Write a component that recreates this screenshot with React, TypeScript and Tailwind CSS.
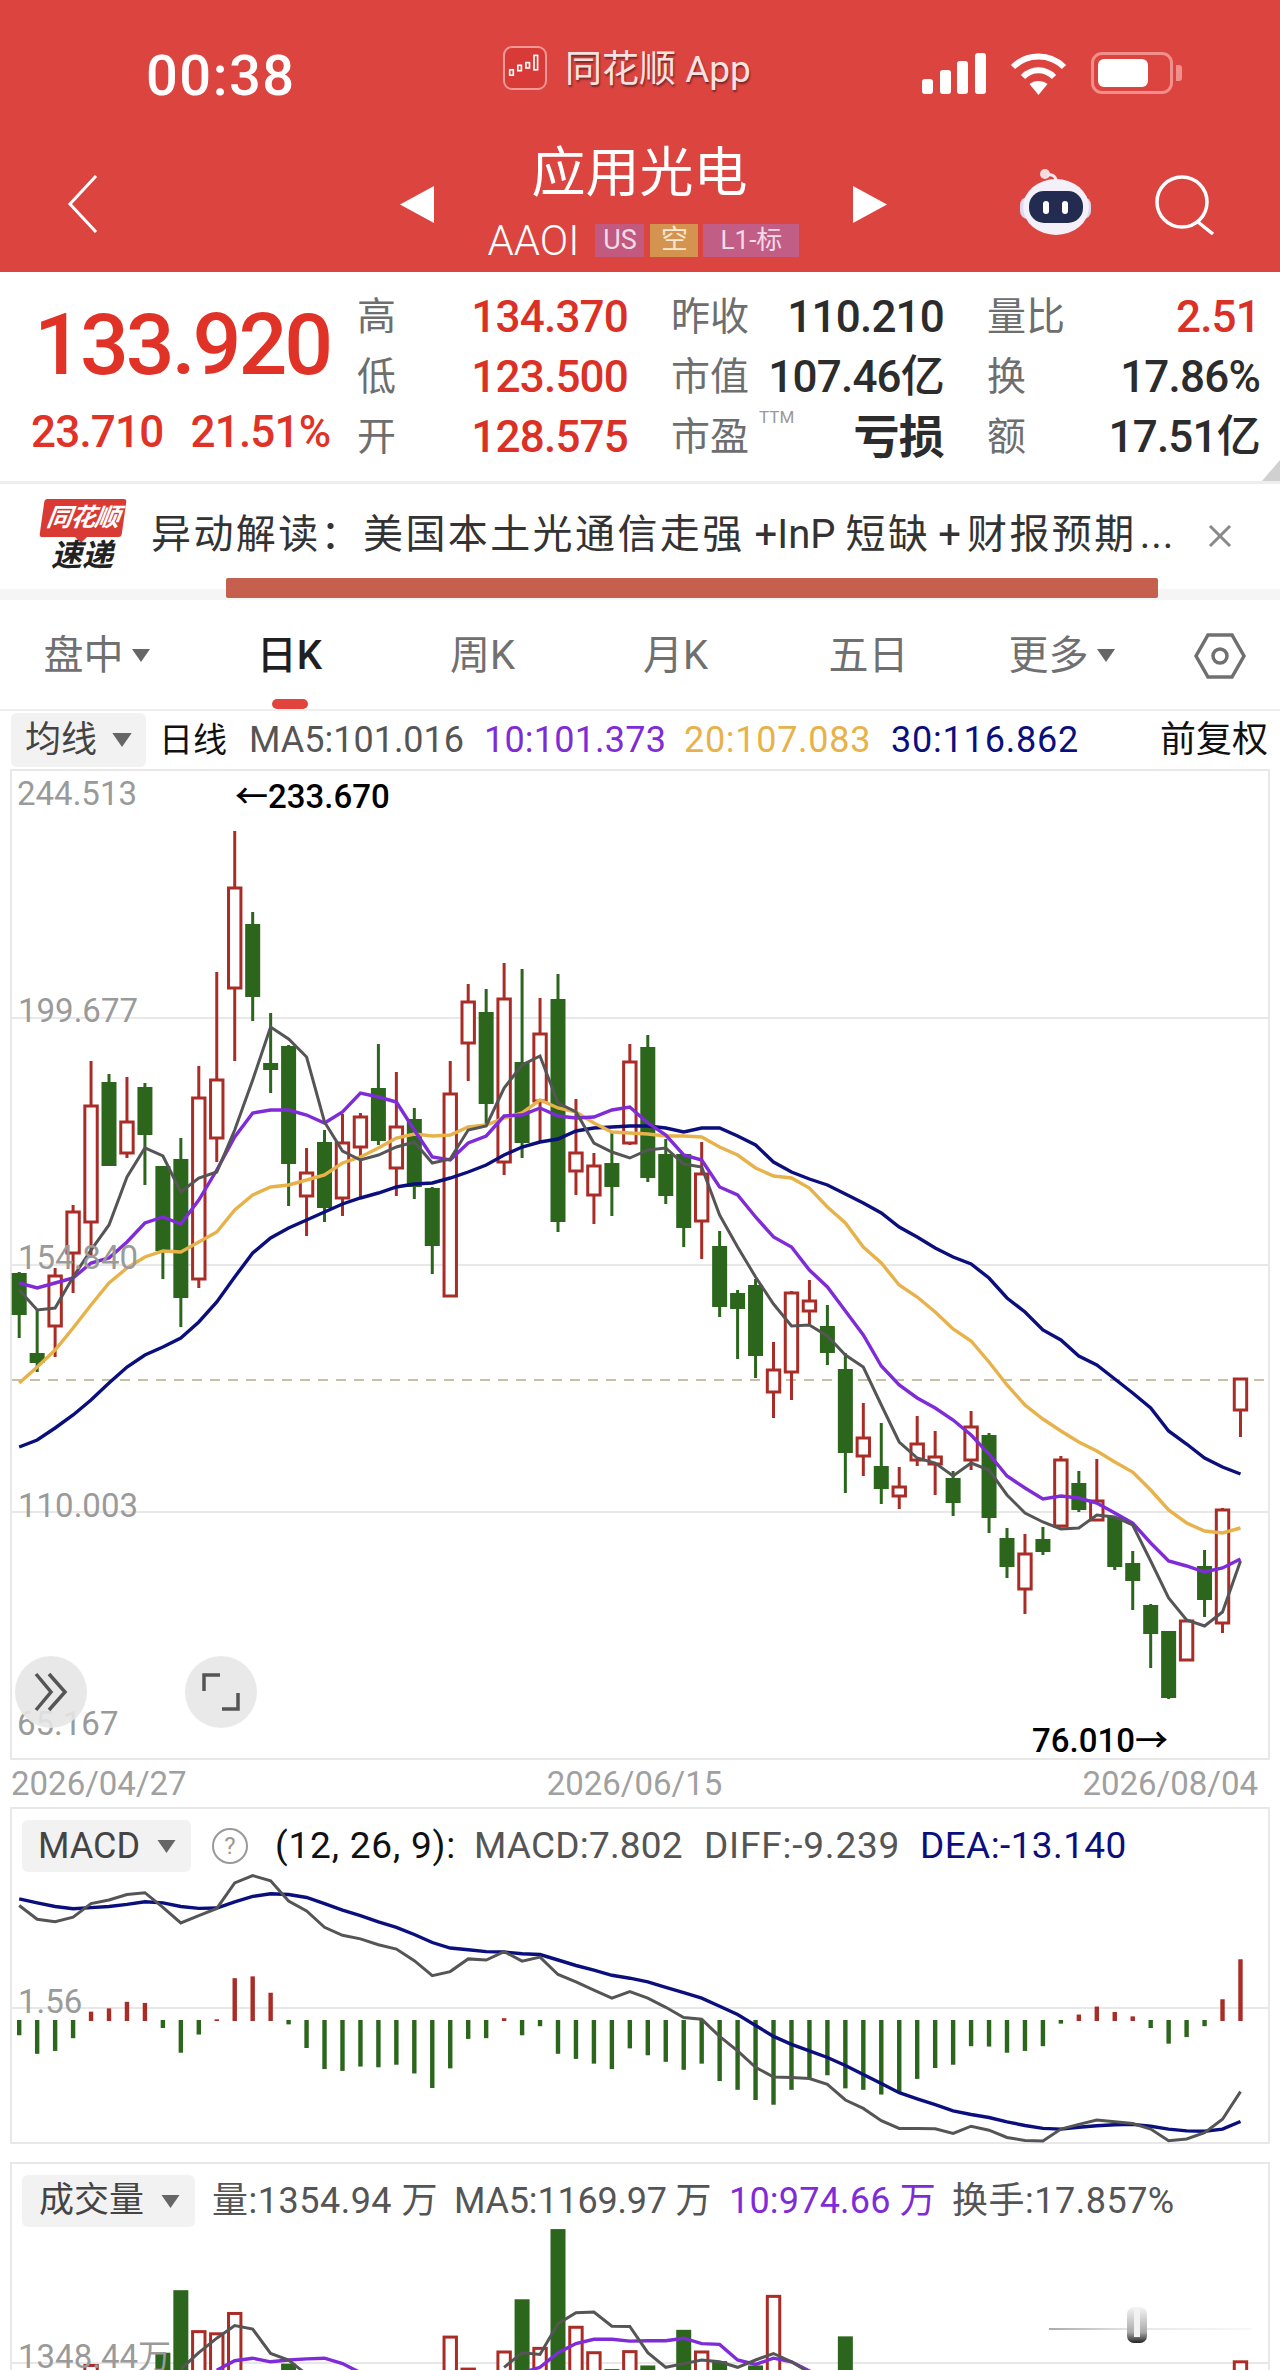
const GREEN = '#2b661c';
const RED = '#a92c26';
const GRAY = '#555555';
const PURPLE = '#7f2bd8';
const YELLOW = '#e8b24a';
const NAVY = '#0a0f7d';

const cx = (i: number) => 19.2 + 17.96 * i;

// [wick top, body top, body bottom, wick bottom, up]
const candles: [number, number, number, number, number][] = [
	[1272, 1273, 1315, 1338, 0], [1310, 1353, 1363, 1372, 0], [1268, 1276, 1326, 1357, 1], [1205, 1212, 1253, 1293, 1],
	[1061, 1106, 1222, 1257, 1], [1074, 1082, 1166, 1166, 0], [1077, 1122, 1153, 1158, 1], [1083, 1087, 1135, 1185, 0],
	[1166, 1166, 1251, 1279, 0], [1138, 1159, 1298, 1327, 0], [1066, 1098, 1279, 1288, 1], [972, 1080, 1138, 1162, 1],
	[831, 888, 988, 1061, 1], [912, 924, 997, 1021, 0], [1013, 1063, 1070, 1093, 0], [1045, 1046, 1164, 1206, 0],
	[1148, 1173, 1196, 1236, 1], [1130, 1142, 1208, 1222, 0], [1114, 1143, 1198, 1216, 1], [1113, 1117, 1147, 1198, 1],
	[1044, 1088, 1141, 1145, 0], [1072, 1127, 1168, 1196, 1], [1108, 1119, 1187, 1199, 0], [1187, 1188, 1246, 1274, 0],
	[1061, 1094, 1296, 1296, 1], [984, 1002, 1043, 1081, 1], [989, 1012, 1104, 1125, 0], [963, 999, 1162, 1175, 1],
	[969, 1062, 1143, 1158, 0], [998, 1034, 1101, 1142, 1], [974, 999, 1222, 1232, 0], [1099, 1153, 1171, 1195, 1],
	[1153, 1166, 1195, 1224, 1], [1133, 1163, 1187, 1216, 0], [1044, 1062, 1143, 1145, 1], [1035, 1047, 1178, 1182, 0],
	[1139, 1154, 1196, 1204, 0], [1154, 1154, 1228, 1247, 0], [1142, 1174, 1221, 1259, 1], [1231, 1246, 1307, 1317, 0],
	[1290, 1293, 1309, 1359, 0], [1279, 1285, 1356, 1378, 0], [1342, 1370, 1392, 1418, 1], [1291, 1293, 1372, 1400, 1],
	[1280, 1301, 1311, 1324, 1], [1305, 1326, 1353, 1365, 0], [1353, 1369, 1453, 1493, 0], [1403, 1438, 1456, 1476, 1],
	[1423, 1466, 1489, 1504, 0], [1467, 1487, 1496, 1509, 1], [1416, 1444, 1460, 1466, 1], [1431, 1457, 1464, 1495, 1],
	[1471, 1478, 1503, 1516, 0], [1411, 1427, 1460, 1470, 1], [1433, 1435, 1518, 1533, 0], [1528, 1538, 1567, 1578, 0],
	[1534, 1554, 1589, 1614, 1], [1527, 1539, 1552, 1555, 0], [1456, 1460, 1526, 1526, 1], [1471, 1483, 1510, 1512, 0],
	[1459, 1501, 1520, 1520, 1], [1516, 1517, 1567, 1570, 0], [1551, 1563, 1581, 1610, 0], [1604, 1605, 1634, 1668, 0],
	[1631, 1631, 1698, 1699, 0], [1621, 1621, 1660, 1661, 1], [1550, 1566, 1600, 1617, 0], [1508, 1510, 1623, 1633, 1],
	[1378, 1379, 1410, 1437, 1],
];

const ma5 = [1290, 1310, 1308, 1277, 1250, 1225, 1177, 1148, 1156, 1192, 1178, 1172, 1130, 1080, 1027, 1039, 1057, 1122, 1151, 1160, 1155, 1147, 1142, 1163, 1159, 1130, 1126, 1088, 1065, 1056, 1103, 1112, 1143, 1152, 1158, 1150, 1148, 1164, 1167, 1215, 1247, 1277, 1304, 1326, 1325, 1336, 1355, 1367, 1405, 1442, 1458, 1463, 1476, 1463, 1470, 1495, 1513, 1522, 1529, 1528, 1515, 1517, 1525, 1561, 1598, 1620, 1626, 1612, 1561];
const ma10 = [1283, 1288, 1283, 1278, 1263, 1258, 1242, 1223, 1217, 1224, 1200, 1170, 1137, 1113, 1110, 1110, 1115, 1123, 1112, 1093, 1097, 1102, 1130, 1157, 1160, 1143, 1136, 1116, 1115, 1108, 1116, 1118, 1117, 1110, 1107, 1123, 1135, 1155, 1160, 1187, 1195, 1217, 1237, 1247, 1270, 1287, 1311, 1335, 1366, 1385, 1398, 1408, 1420, 1435, 1454, 1476, 1488, 1499, 1496, 1498, 1503, 1513, 1523, 1543, 1561, 1566, 1572, 1568, 1559];
const ma20 = [1383, 1367, 1350, 1328, 1305, 1283, 1268, 1257, 1251, 1252, 1242, 1232, 1210, 1195, 1187, 1185, 1180, 1175, 1163, 1157, 1148, 1138, 1134, 1136, 1135, 1127, 1125, 1118, 1113, 1100, 1108, 1112, 1123, 1132, 1133, 1134, 1136, 1136, 1137, 1147, 1155, 1168, 1176, 1178, 1188, 1207, 1223, 1247, 1263, 1285, 1297, 1312, 1329, 1341, 1362, 1385, 1405, 1419, 1431, 1442, 1451, 1462, 1472, 1490, 1510, 1523, 1531, 1533, 1528];
const ma30 = [1447, 1440, 1428, 1415, 1400, 1383, 1367, 1355, 1347, 1338, 1322, 1302, 1277, 1253, 1238, 1228, 1220, 1212, 1204, 1198, 1193, 1187, 1184, 1183, 1178, 1172, 1165, 1155, 1147, 1142, 1139, 1131, 1128, 1127, 1126, 1126, 1128, 1132, 1128, 1128, 1136, 1145, 1162, 1172, 1179, 1185, 1194, 1203, 1213, 1227, 1237, 1248, 1257, 1264, 1278, 1298, 1312, 1330, 1340, 1356, 1365, 1379, 1393, 1408, 1431, 1444, 1458, 1467, 1474];

// values below are read off the 2.75x crop, y = 1800 + v / 2.75
const low = (v: number) => 1800 + v / 2.75;
const macdBars: [number, number][] = [
	[647, 0], [698, 0], [690, 0], [655, 0], [582, 1], [573, 1], [555, 1], [558, 1], [627, 0], [695, 0], [645, 0], [603, 1],
	[490, 1], [485, 1], [530, 1], [617, 0], [682, 0], [740, 0], [745, 0], [733, 0], [735, 0], [728, 0], [752, 0], [792, 0],
	[738, 0], [657, 0], [655, 0], [600, 1], [647, 0], [622, 0], [698, 0], [712, 0], [725, 0], [740, 0], [683, 0], [702, 0],
	[720, 0], [742, 0], [725, 0], [773, 0], [797, 0], [825, 0], [838, 0], [797, 0], [768, 0], [757, 0], [793, 0], [797, 0],
	[810, 0], [805, 0], [767, 0], [737, 0], [728, 0], [677, 0], [678, 0], [695, 0], [690, 0], [677, 0], [615, 0], [590, 1],
	[568, 1], [583, 1], [595, 1], [627, 0], [670, 0], [652, 0], [622, 0], [548, 1], [438, 1],
];
const diff = [290, 328, 335, 322, 285, 275, 260, 255, 295, 338, 318, 298, 228, 208, 222, 278, 305, 350, 372, 382, 398, 410, 442, 483, 472, 437, 440, 417, 443, 432, 480, 500, 523, 545, 527, 545, 570, 598, 603, 650, 690, 735, 762, 763, 766, 782, 825, 848, 882, 903, 903, 904, 917, 897, 908, 928, 936, 938, 905, 892, 880, 885, 890, 905, 937, 932, 915, 878, 802];
const dea = [272, 283, 293, 299, 296, 293, 287, 280, 283, 293, 298, 297, 280, 265, 258, 260, 268, 285, 303, 318, 335, 350, 370, 392, 407, 412, 417, 418, 423, 425, 440, 455, 468, 482, 490, 500, 515, 530, 545, 567, 590, 620, 650, 672, 690, 708, 730, 755, 780, 805, 822, 838, 855, 865, 873, 885, 895, 903, 905, 900, 896, 893, 892, 897, 905, 910, 911, 905, 884];

const volBars: [number, number, number][] = [
	[4, 1555, 1], [8, 1520, 0], [9, 1348, 0], [10, 1462, 1], [11, 1468, 1], [12, 1412, 1], [15, 1550, 0], [24, 1477, 1], [25, 1565, 1],
	[27, 1518, 1], [28, 1373, 0], [29, 1508, 1], [30, 1180, 0], [31, 1450, 1], [32, 1520, 1], [33, 1565, 0], [34, 1517, 1], [35, 1555, 0],
	[37, 1457, 0], [38, 1518, 1], [39, 1543, 0], [41, 1555, 0], [42, 1365, 1], [46, 1475, 0], [68, 1545, 1],
];
const volGray: [number, number][] = [[9, 1565], [10, 1520], [11, 1480], [12, 1445], [13, 1455], [14, 1522], [15, 1540], [16, 1580]];
const volGray2: [number, number][] = [[27, 1560], [28, 1520], [29, 1525], [30, 1440], [31, 1410], [32, 1408], [33, 1447], [34, 1448], [35, 1520], [36, 1560], [37, 1550], [38, 1540], [39, 1545], [40, 1560], [41, 1540], [42, 1522], [43, 1545], [44, 1575]];
const volPurple: [number, number][] = [[11, 1568], [12, 1542], [13, 1535], [14, 1545], [15, 1540], [16, 1537], [17, 1535], [18, 1550], [19, 1575]];
const volPurple2: [number, number][] = [[28, 1575], [29, 1560], [30, 1520], [31, 1495], [32, 1483], [33, 1483], [34, 1488], [35, 1487], [36, 1487], [37, 1480], [38, 1495], [39, 1497], [40, 1540], [41, 1552], [42, 1535], [43, 1545], [44, 1570], [45, 1600]];

const line = (ys: number[]) => ys.map((y, i) => `${cx(i).toFixed(1)},${y}`).join(' ');
const lowLine = (ys: number[]) => ys.map((y, i) => `${cx(i).toFixed(1)},${low(y).toFixed(1)}`).join(' ');
const lowPairs = (ps: [number, number][]) => ps.map(([i, y]) => `${cx(i).toFixed(1)},${low(y).toFixed(1)}`).join(' ');

const Caret = ({ className }: { className: string }) => (
	<svg viewBox="0 0 18 13" className={className}>
		<polygon points="0,0 18,0 9,13" fill="#666" />
	</svg>
);

const Candle = ({ i, d }: { i: number; d: [number, number, number, number, number] }) => {
	const x = cx(i);
	const [hi, top, bot, lo, up] = d;
	if (up) {
		return (
			<g stroke={RED} strokeWidth="3" fill="#fff">
				<line x1={x} x2={x} y1={hi} y2={top} />
				<line x1={x} x2={x} y1={bot} y2={lo} />
				<rect x={x - 6.2} y={top} width="12.4" height={bot - top} />
			</g>
		);
	}
	return (
		<g fill={GREEN}>
			<rect x={x - 1.5} y={hi} width="3" height={lo - hi} />
			<rect x={x - 7.5} y={top} width="15" height={Math.max(bot - top, 2)} />
		</g>
	);
};

const MainChart = () => (
	<svg viewBox="10 769 1260 991" width="1260" height="991" className="absolute -left-[2px] -top-[2px]">
		<line x1="12" x2="1268" y1="1018" y2="1018" stroke="#e8e8e8" strokeWidth="2" />
		<line x1="12" x2="1268" y1="1265" y2="1265" stroke="#e8e8e8" strokeWidth="2" />
		<line x1="12" x2="1268" y1="1512" y2="1512" stroke="#e8e8e8" strokeWidth="2" />
		<line x1="12" x2="1268" y1="1380" y2="1380" stroke="#c9bfa5" strokeWidth="2" strokeDasharray="10 8" />
		{candles.map((d, i) => (
			<Candle key={i} i={i} d={d} />
		))}
		<polyline points={line(ma30)} fill="none" stroke={NAVY} strokeWidth="3.4" />
		<polyline points={line(ma20)} fill="none" stroke={YELLOW} strokeWidth="3.4" />
		<polyline points={line(ma10)} fill="none" stroke={PURPLE} strokeWidth="3.4" />
		<polyline points={line(ma5)} fill="none" stroke={GRAY} strokeWidth="3" />
		<g fill="#9a9a9a" fontSize="33">
			<text x="17" y="805">244.513</text>
			<text x="18" y="1022">199.677</text>
			<text x="18" y="1269">154.840</text>
			<text x="18" y="1517">110.003</text>
			<text x="17" y="1735">65.167</text>
		</g>
		<g fill="#000" fontSize="33" fontWeight="500">
			<text x="235" y="808">←233.670</text>
			<text x="1032" y="1752">76.010→</text>
		</g>
	</svg>
);

const MacdChart = () => (
	<svg viewBox="10 1807 1260 337" width="1260" height="337" className="absolute -left-[2px] -top-[2px]">
		<line x1="12" x2="1268" y1="2008" y2="2008" stroke="#e8e8e8" strokeWidth="2" />
		{macdBars.map(([v, up], i) =>
			up ? (
				<rect key={i} x={cx(i) - 2.2} y={low(v)} width="4.4" height={2021 - low(v)} fill={RED} />
			) : (
				<rect key={i} x={cx(i) - 2.2} y="2020" width="4.4" height={low(v) - 2020} fill={GREEN} />
			),
		)}
		<polyline points={lowLine(dea)} fill="none" stroke={NAVY} strokeWidth="3.4" />
		<polyline points={lowLine(diff)} fill="none" stroke={GRAY} strokeWidth="3" />
		<text x="18" y="2013" fill="#9a9a9a" fontSize="33">1.56</text>
	</svg>
);

const VolumeChart = () => (
	<svg viewBox="10 2162 1260 208" width="1260" height="208" className="absolute -left-[2px] -top-[2px]">
		<line x1="12" x2="1268" y1="2363" y2="2363" stroke="#e8e8e8" strokeWidth="2" />
		{volBars.map(([i, v, up]) =>
			up ? (
				<rect key={i} x={cx(i) - 6.2} y={low(v)} width="12.4" height="220" fill="#fff" stroke={RED} strokeWidth="3" />
			) : (
				<rect key={i} x={cx(i) - 7.5} y={low(v)} width="15" height="220" fill={GREEN} />
			),
		)}
		<polyline points={lowPairs(volPurple)} fill="none" stroke={PURPLE} strokeWidth="3.4" />
		<polyline points={lowPairs(volPurple2)} fill="none" stroke={PURPLE} strokeWidth="3.4" />
		<polyline points={lowPairs(volGray)} fill="none" stroke={GRAY} strokeWidth="3" />
		<polyline points={lowPairs(volGray2)} fill="none" stroke={GRAY} strokeWidth="3" />
		<text x="18" y="2368" fill="#9a9a9a" fontSize="33">1348.44万</text>
		{/* faint watermark, bottom right */}
		<defs>
			<linearGradient id="wm" x1="0" x2="1" y1="0" y2="0">
				<stop offset="0" stopColor="#aaa" />
				<stop offset="0.4" stopColor="#e6e6e6" />
				<stop offset="1" stopColor="#f8f8f8" />
			</linearGradient>
			<linearGradient id="wu" x1="0" x2="0" y1="0" y2="1">
				<stop offset="0" stopColor="#f4f4f4" />
				<stop offset="0.7" stopColor="#aaa" />
				<stop offset="1" stopColor="#222" />
			</linearGradient>
		</defs>
		<rect x="1049" y="2328" width="203" height="2" fill="url(#wm)" />
		<rect x="1127" y="2307" width="20" height="36" rx="7" fill="url(#wu)" />
		<rect x="1134" y="2307" width="6" height="30" fill="#f2f2f2" />
	</svg>
);

const Robot = () => (
	<svg viewBox="0 0 73 66" className="w-[73px] h-[66px]">
		<circle cx="26" cy="5" r="5" fill="#f5dcdc" />
		<path d="M28 6C33 5 37 7 37 12" fill="none" stroke="#f3e6ef" strokeWidth="3" />
		<rect x="1" y="28" width="71" height="22" rx="8" fill="#dcd6ee" />
		<ellipse cx="37" cy="38" rx="33" ry="28" fill="#f3f0fa" />
		<rect x="10" y="22" width="54" height="32" rx="15" fill="#232c50" />
		<rect x="24" y="32" width="6" height="13" rx="3" fill="#fff" />
		<rect x="43" y="32" width="6" height="13" rx="3" fill="#fff" />
	</svg>
);

const quotes: { label: string; value: string; red?: boolean; bold?: boolean; ttm?: boolean }[] = [
	{ label: '高', value: '134.370', red: true },
	{ label: '昨收', value: '110.210' },
	{ label: '量比', value: '2.51', red: true },
	{ label: '低', value: '123.500', red: true },
	{ label: '市值', value: '107.46亿' },
	{ label: '换', value: '17.86%' },
	{ label: '开', value: '128.575', red: true },
	{ label: '市盈', value: '亏损', bold: true, ttm: true },
	{ label: '额', value: '17.51亿' },
];

const tabs = ['盘中', '日K', '周K', '月K', '五日', '更多'];

const App = () => (
	<div className="w-[1280px] h-[2370px] overflow-hidden bg-white font-[family-name:Roboto,'Noto_Sans_CJK_SC',sans-serif]">
		<header className="h-[272px] bg-[#dc4440] text-white flex flex-col">
			<div className="mt-[41px] h-[60px] flex items-center">
				<span className="ml-[146px] w-[150px] text-[56px] leading-none font-medium tracking-[1.5px] mt-[10px] whitespace-nowrap">00:38</span>
				<div className="ml-[207px] w-[44px] h-[44px] rounded-[9px] bg-[#d83a38] border-2 border-[#ef9a96] mt-[-6px] flex items-center justify-center">
					<svg viewBox="0 0 40 40" className="w-[36px] h-[36px]" fill="none" stroke="#fff" strokeWidth="1.8">
						<rect x="3" y="22" width="4" height="6" />
						<rect x="12" y="17" width="4" height="6" />
						<rect x="21" y="14" width="4" height="6" />
						<rect x="30" y="6" width="4" height="16" />
					</svg>
				</div>
				<span className="ml-[18px] w-[190px] text-[37px] leading-none text-[#f6e2e0] mt-[-4px] [text-shadow:1px_2px_2px_rgba(0,0,0,0.45)] whitespace-nowrap">同花顺 App</span>
				<svg viewBox="0 0 64 41" className="ml-[167px] w-[64px] h-[41px] mt-[5px]" fill="#fff">
					<rect x="0" y="26" width="11" height="15" rx="3" />
					<rect x="18" y="17" width="11" height="24" rx="3" />
					<rect x="35" y="8" width="11" height="33" rx="3" />
					<rect x="53" y="0" width="11" height="41" rx="3" />
				</svg>
				<svg viewBox="0 0 57 43" className="ml-[24px] w-[57px] h-[43px] mt-[4px]" fill="none" stroke="#fff" strokeWidth="6">
					<path d="M3 15C17 1 40 1 54 15" />
					<path d="M13 25c9-9 22-9 31 0" />
					<path d="M28.500 43l-9-11c5-4 13-4 18 0z" fill="#fff" stroke="none" />
				</svg>
				<div className="ml-[24px] w-[82px] h-[42px] mt-[4px] rounded-[11px] border-[3px] border-[#f08f8b] p-[4px]">
					<div className="w-[50px] h-full rounded-[6px] bg-white" />
				</div>
				<div className="ml-[3px] w-[6px] h-[16px] mt-[4px] rounded-r-[3px] bg-[#f08f8b]" />
			</div>
			<div className="mt-[40px] h-[116px] flex items-center">
				<svg viewBox="0 0 31 58" className="ml-[67px] w-[31px] h-[58px] mt-[10px]" fill="none" stroke="#fff" strokeWidth="3">
					<polyline points="29,1 3,29 29,57" />
				</svg>
				<svg viewBox="0 0 34 37" className="ml-[302px] w-[34px] h-[37px] mt-[10px]" fill="#fff">
					<polygon points="34,0 34,37 0,18.500" />
				</svg>
				<div className="w-[419px] flex flex-col items-center">
					<span className="h-[62px] text-[54px] leading-[66px] pr-[8px] whitespace-nowrap">应用光电</span>
					<div className="mt-[21px] h-[33px] flex items-stretch">
						<span className="text-[42px] leading-[33px] font-light mr-[16px]">AAOI</span>
						<span className="w-[49px] bg-[#c2597f] text-[#f0dbe6] text-[27px] leading-[33px] text-center">US</span>
						<span className="ml-[6px] w-[48px] bg-[#d4934f] text-[#f8e8d4] text-[27px] leading-[33px] text-center">空</span>
						<span className="ml-[5px] w-[96px] bg-[#c25e86] text-[#f0dbe6] text-[26px] leading-[33px] text-center whitespace-nowrap">L1-标</span>
					</div>
				</div>
				<svg viewBox="0 0 34 37" className="w-[34px] h-[37px] mt-[10px]" fill="#fff">
					<polygon points="0,0 0,37 34,18.500" />
				</svg>
				<div className="ml-[132px] mt-[6px]">
					<Robot />
				</div>
				<svg viewBox="0 0 60 61" className="ml-[63px] w-[60px] h-[61px] mt-[10px]" fill="none" stroke="#fff" strokeWidth="3.500">
					<circle cx="27" cy="28" r="25" />
					<line x1="43" y1="48" x2="58" y2="60" />
				</svg>
			</div>
		</header>

		<section className="relative h-[209px] flex">
			<div className="ml-[31px] w-[310px] flex flex-col text-[#e03226]">
				<span className="mt-[34px] ml-[3px] h-[78px] text-[86px] leading-[78px] font-medium tracking-[-3px] whitespace-nowrap">133.920</span>
				<div className="mt-[26px] flex h-[44px] text-[44px] leading-[44px] font-medium tracking-[-0.800px] whitespace-nowrap">
					<span>23.710</span>
					<span className="ml-[27px]">21.51%</span>
				</div>
			</div>
			<div className="ml-[16px] mt-[15px] grid grid-cols-[271px_273px_273px] grid-rows-[60px_60px_60px] gap-x-[43px]">
				{quotes.map((q) => (
					<div key={q.label} className="flex items-center justify-between">
						<span className="relative text-[39px] text-[#6e6e6e] whitespace-nowrap">
							{q.label}
							{q.ttm && <span className="absolute left-[88px] top-[-3px] text-[17px] text-[#999]">TTM</span>}
						</span>
						<span className={`whitespace-nowrap tracking-[-0.800px] ${q.red ? 'text-[#da3026]' : 'text-[#2c2c2c]'} ${q.bold ? 'font-bold text-[46px]' : 'font-medium text-[44px]'}`}>{q.value}</span>
					</div>
				))}
			</div>
			<div className="absolute right-0 bottom-0 w-0 h-0 border-l-[18px] border-l-transparent border-b-[21px] border-b-[#d0d0d0]" />
		</section>
		<div className="h-[3px] bg-[#eeeeee]" />

		<section className="h-[105px] flex">
			<div className="ml-[37px] mt-[15px] w-[88px] flex flex-col items-center">
				<div className="w-[82px] h-[38px] ml-[3px] bg-[#d93a33] rounded-[3px] -skew-x-[8deg] text-white text-[25px] leading-[38px] text-center font-bold italic whitespace-nowrap tracking-[-1px]">同花顺</div>
				<div className="w-0 h-0 border-x-[6px] border-x-transparent border-t-[6px] border-t-[#d93a33]" />
				<div className="ml-[2px] text-[31px] leading-[28px] font-bold italic text-[#222] mt-[-1px]">速递</div>
			</div>
			<div className="ml-[26px] mt-[25px] w-[1024px] h-[52px] flex text-[40px] leading-[52px] text-[#333] whitespace-nowrap">
				<span className="tracking-[2.400px]">异动解读：美国本土光通信走强</span>
				<span className="ml-[10px]">+InP</span>
				<span className="ml-[10px] tracking-[2.400px]">短缺</span>
				<span className="ml-[8px]">+</span>
				<span className="ml-[6px] tracking-[2.400px]">财报预期</span>
				<span className="ml-[3px] tracking-[1px]">...</span>
			</div>
			<svg viewBox="0 0 24 22" className="ml-[33px] mt-[41px] w-[24px] h-[22px]" fill="none" stroke="#8a8a8a" strokeWidth="3">
				<line x1="2" y1="1" x2="22" y2="21" />
				<line x1="22" y1="1" x2="2" y2="21" />
			</svg>
		</section>
		<div className="relative h-[11px] bg-[#f5f5f5]">
			<div className="absolute left-[226px] top-[-11px] w-[932px] h-[20px] rounded-[2px] bg-[#c4604d]" />
		</div>

		<nav className="h-[109px] flex items-center text-[40px] text-[#707070] pt-[2px]">
			{tabs.map((t, i) => (
				<div key={t} className={`relative w-[193px] h-full flex items-center justify-center gap-[8px] ${i === 1 ? 'text-[#1f1f1f] font-medium' : ''}`}>
					{t}
					{(i === 0 || i === 5) && <Caret className="w-[18px] h-[13px]" />}
					{i === 1 && <div className="absolute bottom-0 left-[79px] w-[36px] h-[10px] rounded-[5px] bg-[#e0443c]" />}
				</div>
			))}
			<svg viewBox="0 0 52 46" className="ml-[36px] w-[52px] h-[46px]" fill="none" stroke="#707070" strokeWidth="3.500">
				<polygon points="14,2 38,2 50,23 38,44 14,44 2,23" />
				<circle cx="26" cy="23" r="7" />
			</svg>
		</nav>
		<div className="h-[2px] bg-[#eeeeee]" />

		<div className="h-[58px] flex items-center text-[36px] whitespace-nowrap">
			<div className="ml-[11px] w-[135px] h-[54px] rounded-[6px] bg-[#f2f2f2] flex items-center pl-[14px] text-[#444]">
				均线
				<Caret className="ml-[15px] w-[20px] h-[14px]" />
			</div>
			<span className="ml-[13px] w-[90px] text-[34px] text-[#111]">日线</span>
			<span className="w-[235px] text-[#555]">MA5:101.016</span>
			<span className="w-[200px] tracking-[0.2px] text-[#7f2bd8]">10:101.373</span>
			<span className="w-[207px] tracking-[0.7px] text-[#e8b24a]">20:107.083</span>
			<span className="tracking-[0.8px] text-[#0a0f7d]">30:116.862</span>
			<span className="ml-auto mr-[12px] text-[#111]">前复权</span>
		</div>

		<div className="relative ml-[10px] w-[1260px] h-[991px] border-2 border-[#e8e8e8]">
			<MainChart />
			<div className="absolute left-[3px] top-[885px] w-[72px] h-[72px] rounded-full bg-[#e6e6e6]/90 flex items-center justify-center">
				<svg viewBox="0 0 36 40" className="w-[36px] h-[40px]" fill="none" stroke="#555" strokeWidth="3.500">
					<polyline points="3,2 18,20 3,38" />
					<polyline points="16,2 32,20 16,38" />
				</svg>
			</div>
			<div className="absolute left-[173px] top-[885px] w-[72px] h-[72px] rounded-full bg-[#e9e9e9] flex items-center justify-center">
				<svg viewBox="0 0 38 38" className="w-[38px] h-[38px]" fill="none" stroke="#555" strokeWidth="3.500">
					<polyline points="2,18 2,2 18,2" />
					<polyline points="36,20 36,36 20,36" />
				</svg>
			</div>
		</div>

		<div className="h-[47px] pl-[11px] pr-[22px] flex items-center justify-between text-[33px] text-[#a0a0a0]">
			<span>2026/04/27</span>
			<span>2026/06/15</span>
			<span>2026/08/04</span>
		</div>

		<div className="relative ml-[10px] w-[1260px] h-[337px] border-2 border-[#e8e8e8]">
			<MacdChart />
			<div className="relative mt-[11px] ml-[10px] h-[52px] flex items-center text-[37px] whitespace-nowrap">
				<div className="w-[169px] h-[52px] rounded-[6px] bg-[#f2f2f2] flex items-center pl-[16px] text-[36px] text-[#444]">
					MACD
					<Caret className="ml-[17px] w-[19px] h-[13px]" />
				</div>
				<div className="ml-[21px] w-[36px] h-[36px] rounded-full border-2 border-[#999] text-[24px] leading-[32px] text-center text-[#999]">?</div>
				<span className="ml-[27px] w-[199px] text-[#111] tracking-[0.800px]">(12, 26, 9):</span>
				<span className="w-[230px] text-[#555] tracking-[0.200px]">MACD:7.802</span>
				<span className="w-[216px] text-[#555] tracking-[0.800px]">DIFF:-9.239</span>
				<span className="text-[#0a0f7d] tracking-[0.400px]">DEA:-13.140</span>
			</div>
		</div>

		<div className="relative mt-[18px] ml-[10px] w-[1260px] h-[230px] border-2 border-[#e8e8e8]">
			<VolumeChart />
			<div className="relative mt-[11px] ml-[10px] h-[52px] flex items-center text-[36px] whitespace-nowrap">
				<div className="w-[173px] h-[52px] rounded-[6px] bg-[#f2f2f2] flex items-center pl-[17px] text-[35px] text-[#444]">
					成交量
					<Caret className="ml-[17px] w-[19px] h-[13px]" />
				</div>
				<span className="ml-[17px] w-[242px] text-[#555] tracking-[0.500px]">量:1354.94 万</span>
				<span className="w-[275px] text-[#555] tracking-[-0.200px]">MA5:1169.97 万</span>
				<span className="w-[223px] text-[#7f2bd8] tracking-[0.200px]">10:974.66 万</span>
				<span className="text-[#555] tracking-[0.500px]">换手:17.857%</span>
			</div>
		</div>
	</div>
);

export default App;
